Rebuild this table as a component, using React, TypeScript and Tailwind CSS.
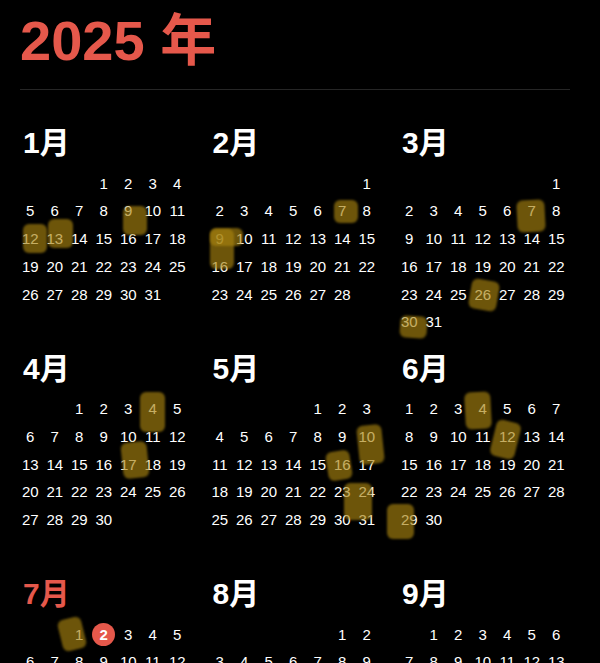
import React from 'react'

const RED = 'text-[#e5584b]'

interface Mark {
  l: number
  t: number
  w: number
  h: number
  r?: number
}

// highlighter strokes, offsets relative to each month's day grid
const marks: Record<number, Mark[]> = {
  0: [
    { l: 4.7, t: 54, w: 24, h: 29 },
    { l: 30.3, t: 49, w: 25, h: 29 },
    { l: 105.3, t: 36, w: 24, h: 29 },
  ],
  1: [
    { l: 126.5, t: 29.5, w: 23.5, h: 23.5 },
    { l: 2.5, t: 59, w: 24, h: 40 },
    { l: 2.5, t: 58, w: 33, h: 18 },
  ],
  2: [
    { l: 119.7, t: 29.5, w: 28, h: 32, r: -3 },
    { l: 73, t: 110, w: 28, h: 30, r: 10 },
    { l: 3, t: 146, w: 27, h: 22, r: 4 },
  ],
  3: [
    { l: 122, t: -4, w: 25, h: 40 },
    { l: 104, t: 46, w: 26, h: 36, r: -6 },
  ],
  4: [
    { l: 150, t: 29, w: 25, h: 39, r: -6 },
    { l: 119.5, t: 55, w: 24, h: 29, r: -9 },
    { l: 136, t: 87.5, w: 28, h: 36.5 },
  ],
  5: [
    { l: 68, t: -3.5, w: 25.5, h: 36.5, r: -3 },
    { l: 95.5, t: 25, w: 25, h: 37, r: 14 },
    { l: -10, t: 108, w: 27, h: 35 },
  ],
  6: [{ l: 41.5, t: -3, w: 24, h: 32, r: -14 }],
}

const MonthBlock: React.FC<{ month: number }> = ({ month }) => {
  const first = new Date(2025, month, 1).getDay()
  const days = new Date(2025, month + 1, 0).getDate()
  const cells: (number | null)[] = []
  for (let i = 0; i < first; i++) cells.push(null)
  for (let d = 1; d <= days; d++) cells.push(d)
  const isCurrent = month === 6

  return (
    <div className="pb-[17px]">
      <div
        className={`h-[30px] pl-[5px] text-[30px] leading-[30px] font-bold ${isCurrent ? RED : 'text-white'}`}
      >
        {month + 1}月
      </div>
      <div className="relative mt-[12px] h-[166.5px]">
        <div className="grid grid-cols-[repeat(7,24.5px)] auto-rows-[27.75px]">
          {cells.map((d, i) => (
            <div key={i} className="flex items-center justify-center text-[15px] text-white">
              {d !== null &&
                (isCurrent && d === 2 ? (
                  <span className="flex h-[23px] w-[23px] items-center justify-center rounded-full bg-[#e5584b] font-bold">
                    {d}
                  </span>
                ) : (
                  d
                ))}
            </div>
          ))}
        </div>
        {(marks[month] ?? []).map((m, i) => (
          <div
            key={i}
            className="absolute rounded-[6px] bg-[#a8820f]/65 blur-[1px]"
            style={{
              left: m.l,
              top: m.t,
              width: m.w,
              height: m.h,
              transform: m.r ? `rotate(${m.r}deg)` : undefined,
            }}
          />
        ))}
      </div>
    </div>
  )
}

export default function App() {
  return (
    <div
      className="min-h-screen bg-black"
      style={{ fontFamily: '"Liberation Sans", "Noto Sans CJK JP", sans-serif' }}
    >
      {/* Header */}
      <div className="px-5 pt-[13px]">
        <h1 className={`text-[56px] leading-[56px] font-bold ${RED}`}>2025 年</h1>
        <div className="mt-5 h-px w-[550px] bg-[#262626]" />
      </div>

      {/* Months */}
      <div className="grid grid-cols-[repeat(3,171.5px)] gap-x-[18px] pl-[18px] pt-[38px]">
        {Array.from({ length: 12 }, (_, m) => (
          <MonthBlock key={m} month={m} />
        ))}
      </div>
    </div>
  )
}
